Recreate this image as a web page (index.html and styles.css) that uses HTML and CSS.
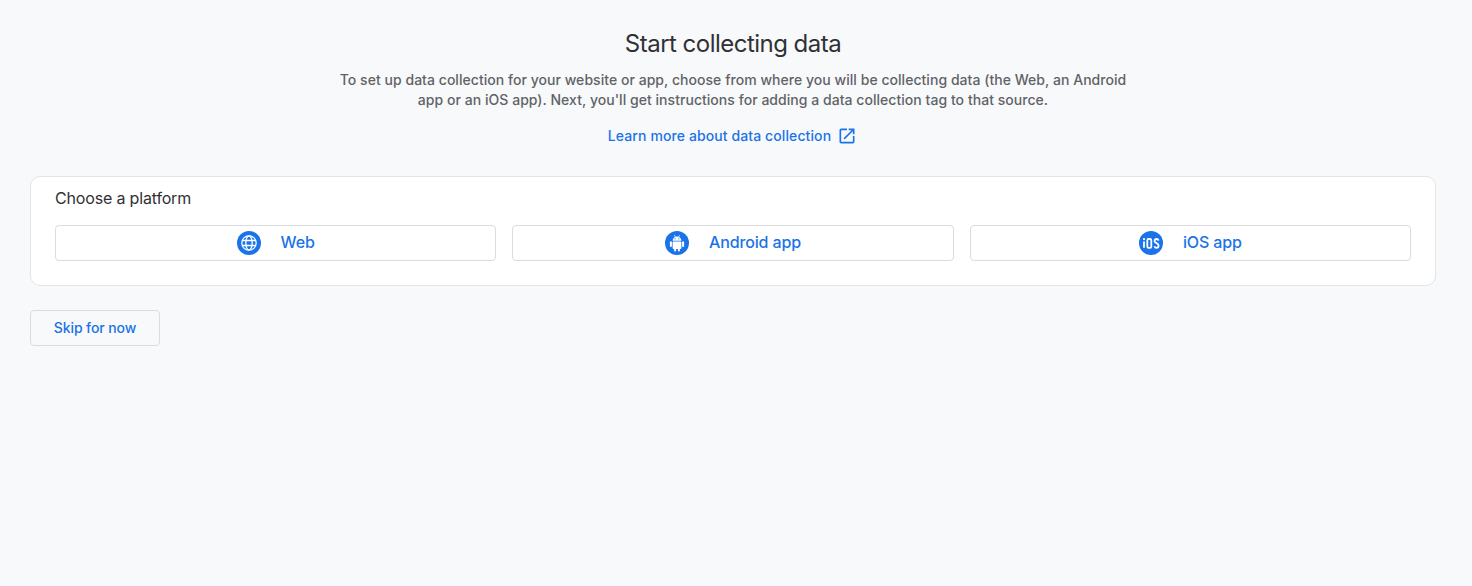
FILE: index.html
```html
<!DOCTYPE html>
<html lang="en">
<head>
<meta charset="utf-8">
<title>Start collecting data</title>
<link rel="stylesheet" href="styles.css">
</head>
<body>
<main class="page">
  <header class="intro">
    <h1 class="title">Start collecting data</h1>
    <p class="desc">To set up data collection for your website or app, choose from where you will be collecting data (the Web, an Android<br>app or an iOS app). Next, you'll get instructions for adding a data collection tag to that source.</p>
    <a class="learn" href="#"><span class="learn-text">Learn more about data collection</span>
      <svg class="ext" viewBox="0 0 24 24" width="20" height="20"><path fill="#1a73e8" d="M19 19H5V5h7V3H5a2 2 0 0 0-2 2v14a2 2 0 0 0 2 2h14a2 2 0 0 0 2-2v-7h-2v7zM14 3v2h3.59l-9.83 9.83 1.41 1.41L19 6.41V10h2V3h-7z"/></svg>
    </a>
  </header>
  <section class="card">
    <h2 class="card-title">Choose a platform</h2>
    <div class="platforms">
      <button class="platform">
        <span class="badge">
          <svg viewBox="0 0 24 24" width="24" height="24"><circle cx="12" cy="12" r="12" fill="#1a73e8"/><g fill="none" stroke="#fff" stroke-width="1.3"><circle cx="12" cy="12" r="7.2"/><ellipse cx="12" cy="12" rx="3.2" ry="7.2"/><path d="M5 9.5h14M5 14.5h14"/></g></svg>
        </span>
        <span class="label">Web</span>
      </button>
      <button class="platform">
        <span class="badge">
          <svg viewBox="0 0 24 24" width="24" height="24"><circle cx="12" cy="12" r="12" fill="#1a73e8"/><g fill="#fff"><path d="M7.6 9.8a4.4 4.4 0 0 1 8.8 0z"/><rect x="7.6" y="10.5" width="8.8" height="7.4" rx=".9"/><rect x="4.9" y="10.3" width="2" height="5.8" rx="1"/><rect x="17.1" y="10.3" width="2" height="5.8" rx="1"/><rect x="9.1" y="15.4" width="2" height="5" rx="1"/><rect x="12.9" y="15.4" width="2" height="5" rx="1"/></g><path stroke="#fff" stroke-width=".7" d="M9.3 4l1.1 1.9M14.7 4l-1.1 1.9"/><circle cx="10.1" cy="7.8" r=".6" fill="#1a73e8"/><circle cx="13.9" cy="7.8" r=".6" fill="#1a73e8"/></svg>
        </span>
        <span class="label">Android app</span>
      </button>
      <button class="platform">
        <span class="badge">
          <svg viewBox="0 0 24 24" width="24" height="24"><circle cx="12" cy="12" r="12" fill="#1a73e8"/><g fill="none" stroke="#fff" stroke-width="1.8"><path d="M5 10.4v6.4"/><rect x="8.3" y="8" width="4" height="8.8" rx="1.3"/><path d="M19.6 9.6c-.3-.9-1-1.6-2-1.6-1.2 0-2 .8-2 2 0 2.6 4 1.6 4 4.5 0 1.400-.9 2.300-2.100 2.300-1.100 0-1.800-.7-2.100-1.600"/></g><circle cx="5" cy="8.200" r="1.100" fill="#fff"/></svg>
        </span>
        <span class="label">iOS app</span>
      </button>
    </div>
  </section>
  <div class="actions">
    <button class="skip">Skip for now</button>
  </div>
</main>
</body>
</html>
```
FILE: styles.css
```css
* { box-sizing: border-box; }
html, body { margin: 0; height: 100%; }
body {
  background: #f8f9fa;
  font-family: Inter, Roboto, Arial, sans-serif;
  color: #303134;
}
.page { padding: 0 36px 0 30px; }
.intro {
  display: flex;
  flex-direction: column;
  align-items: center;
  padding-top: 28px;
}
.title {
  margin: 0;
  font-size: 24px;
  line-height: 32px;
  font-weight: 400;
  letter-spacing: -.52px;
  color: #303134;
}
.desc {
  margin: 10px 0 0;
  font-size: 14px;
  line-height: 20px;
  font-weight: 500;
  letter-spacing: .04px;
  color: #5f6368;
  text-align: center;
}
.learn {
  display: flex;
  align-items: center;
  gap: 6px;
  margin-top: 16px;
  height: 20px;
  font-size: 14px;
  font-weight: 500;
  letter-spacing: .1px;
  color: #1a73e8;
  text-decoration: none;
}
.learn-text { padding-bottom: 1px; }
.ext { display: block; margin-right: 1px; }
.card {
  margin-top: 30px;
  height: 110px;
  padding: 11px 24px 24px;
  background: #fff;
  border: 1px solid #e3e4e6;
  border-radius: 10px;
}
.card-title {
  margin: 0;
  font-size: 16px;
  line-height: 20px;
  font-weight: 400;
  letter-spacing: -.17px;
  color: #303134;
}
.platforms {
  display: grid;
  grid-template-columns: repeat(3, 1fr);
  gap: 16px;
  margin-top: 17px;
}
.platform {
  display: flex;
  align-items: center;
  justify-content: center;
  gap: 20px;
  height: 36px;
  padding: 0 0 1px;
  background: #fff;
  border: 1px solid #dadce0;
  border-radius: 4px;
  font: inherit;
  cursor: pointer;
}
.badge { display: block; width: 24px; height: 24px; }
.badge svg { display: block; }
.label {
  padding-bottom: 2px;
  font-size: 16px;
  font-weight: 500;
  letter-spacing: -.15px;
  color: #1a73e8;
}
.actions { margin-top: 24px; }
.skip {
  display: block;
  width: 130px;
  height: 36px;
  padding: 0 0 2px;
  background: #f8f9fa;
  border: 1px solid #dadce0;
  border-radius: 4px;
  font: inherit;
  font-size: 14px;
  font-weight: 500;
  letter-spacing: -.1px;
  color: #1a73e8;
  cursor: pointer;
}
```
